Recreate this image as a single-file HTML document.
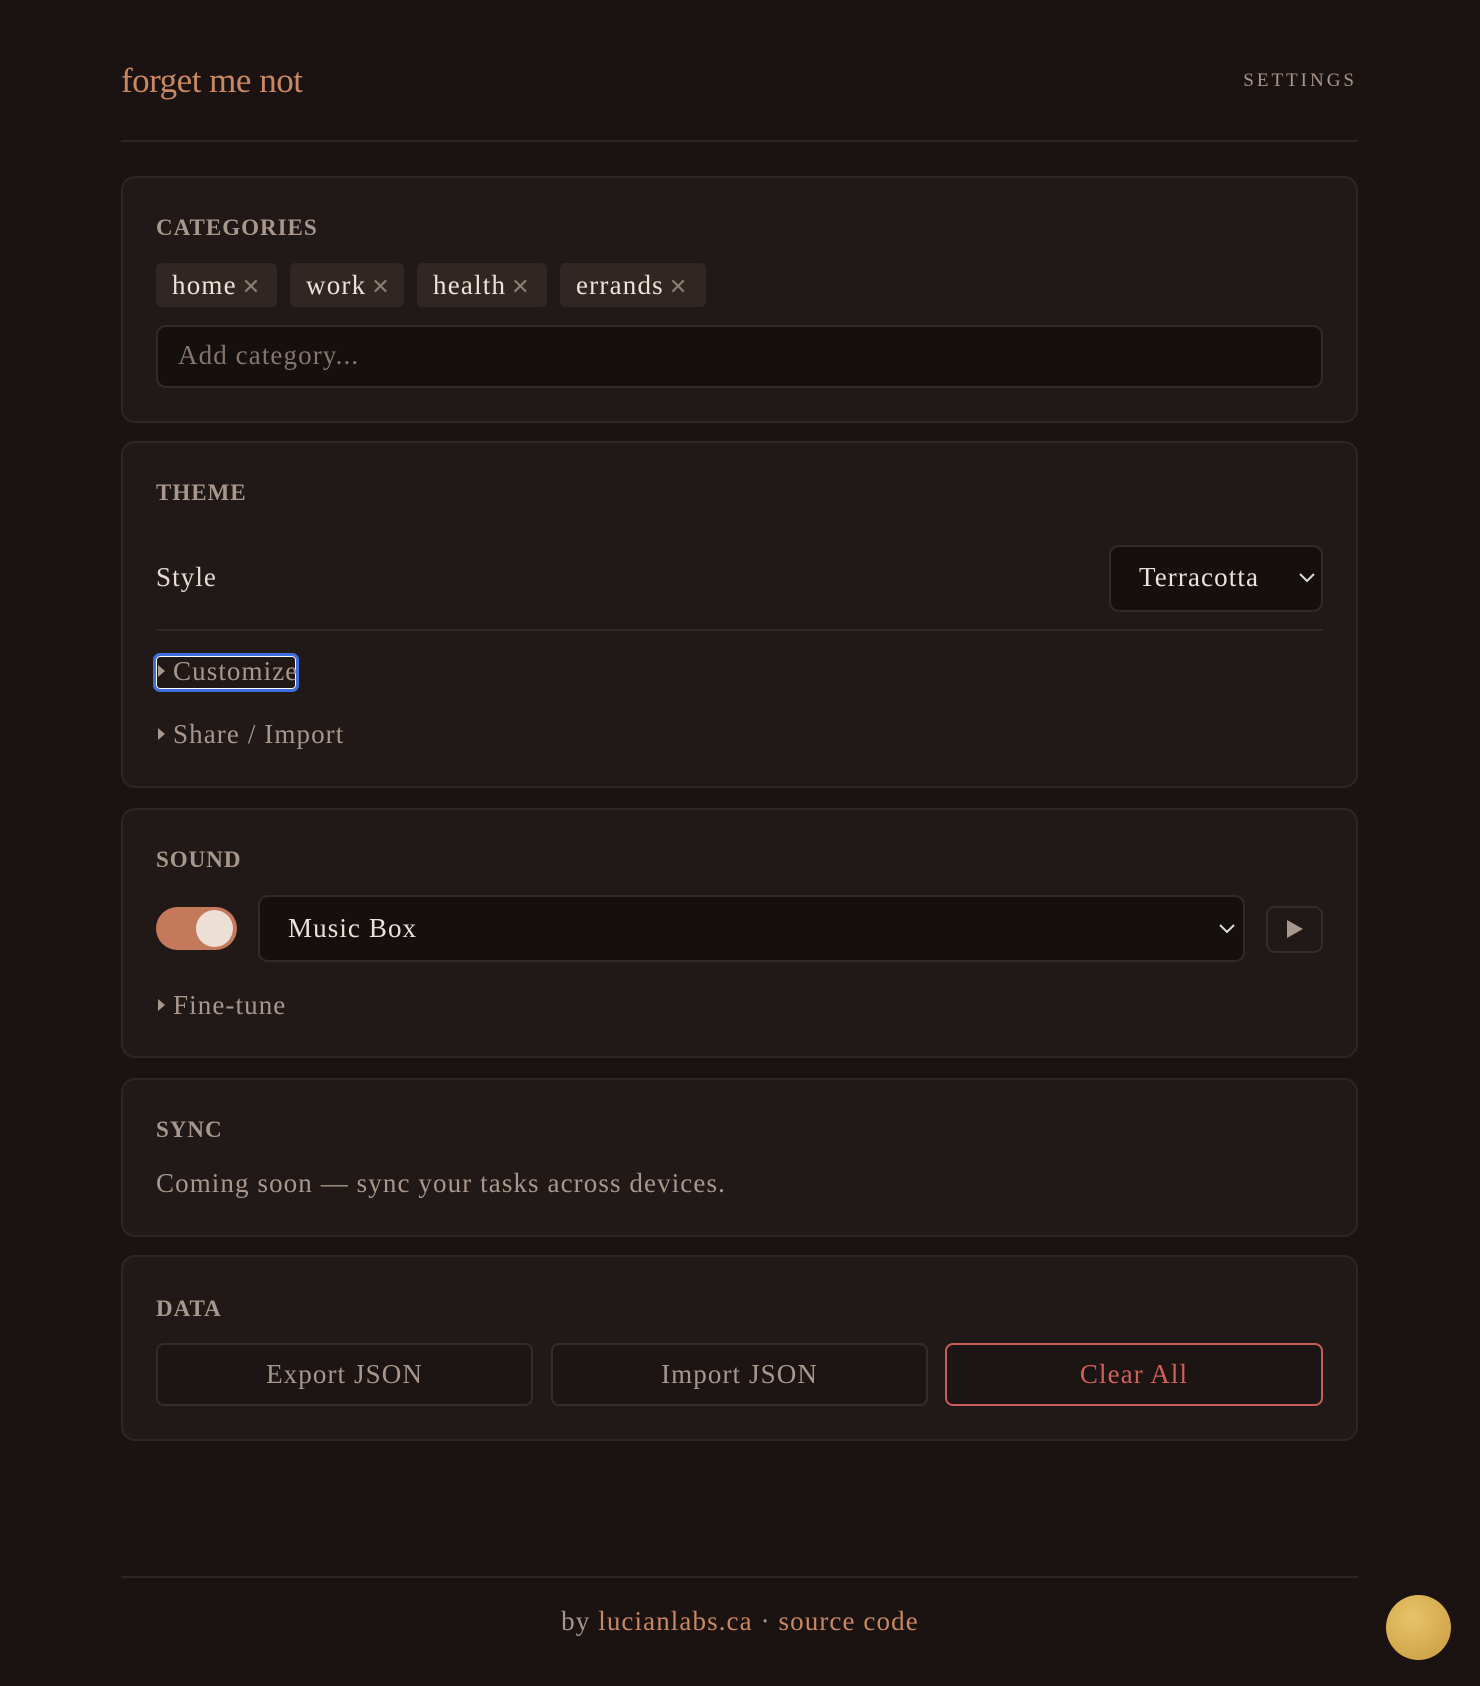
<!DOCTYPE html>
<html><head><meta charset="utf-8"><style>
*{box-sizing:border-box;margin:0;padding:0}
body{width:1480px;height:1686px;background:#1a1311;font-family:"Liberation Serif",serif;color:#e6dbd2;position:relative;overflow:hidden}
.a{position:absolute}
.logo{left:121px;top:61px;font-size:35px;color:#c98763;letter-spacing:-0.5px}
.set{right:123px;top:70px;font-size:19px;letter-spacing:3px;color:#a8978c}
.hl{left:121px;width:1237px;height:2px;background:#2f2623}
.card{left:121px;width:1237px;background:#211917;border:2px solid #2f2623;border-radius:14px}
.lab{left:156px;font-size:23px;font-weight:bold;letter-spacing:1px;color:#a8978c}
.chip{top:263px;height:44px;background:#302622;border-radius:5px;font-size:27px;letter-spacing:1.2px;line-height:44px;padding-left:16px;color:#ece2d9}
.chip span{color:#8c7d74;font-size:22px;margin-left:5px;letter-spacing:0}
.inp{border:2px solid #32292a;background:#150f0e;border-radius:10px}
.tx{font-size:27px;letter-spacing:1.1px}
.btn{top:1343px;height:63px;border:2px solid #352c29;border-radius:8px;background:#1c1513;font-size:27px;letter-spacing:1.1px;line-height:59px;text-align:center;color:#a8978c}
.tri{display:inline-block;width:0;height:0;border-left:7px solid #a8978c;border-top:6px solid transparent;border-bottom:6px solid transparent;margin-right:8px;vertical-align:3px}
</style></head><body>
<div class="a logo">forget me not</div>
<div class="a set">SETTINGS</div>
<div class="a hl" style="top:140px"></div>

<div class="a card" style="top:176px;height:247px"></div>
<div class="a lab" style="top:215px">CATEGORIES</div>
<div class="a chip" style="left:156px;width:121px">home<span>✕</span></div>
<div class="a chip" style="left:290px;width:114px">work<span>✕</span></div>
<div class="a chip" style="left:417px;width:130px">health<span>✕</span></div>
<div class="a chip" style="left:560px;width:146px">errands<span>✕</span></div>
<div class="a inp" style="left:156px;top:325px;width:1167px;height:63px"></div>
<div class="a tx" style="left:178px;top:340px;color:#85766d">Add category...</div>

<div class="a card" style="top:441px;height:347px"></div>
<div class="a lab" style="top:480px">THEME</div>
<div class="a tx" style="left:156px;top:562px">Style</div>
<div class="a inp" style="left:1109px;top:545px;width:214px;height:67px"></div>
<div class="a tx" style="left:1139px;top:562px;color:#ece2d9">Terracotta</div>
<svg class="a" style="left:1297px;top:571px" width="20" height="14"><path d="M3 3l7 7 7-7" stroke="#ddd" stroke-width="2" fill="none"/></svg>
<div class="a hl" style="left:156px;width:1167px;top:629px;background:#322926"></div>
<div class="a" style="left:153px;top:653px;width:146px;height:39px;border:3px solid #3d6fe0;border-radius:7px;box-shadow:0 0 0 1px #fff inset"></div>
<div class="a tx" style="left:158px;top:656px;color:#a8978c"><i class="tri"></i>Customize</div>
<div class="a tx" style="left:158px;top:719px;color:#a8978c"><i class="tri"></i>Share / Import</div>

<div class="a card" style="top:808px;height:250px"></div>
<div class="a lab" style="top:847px">SOUND</div>
<div class="a" style="left:156px;top:907px;width:81px;height:43px;border-radius:22px;background:#c47a5a"></div>
<div class="a" style="left:196px;top:910px;width:37px;height:37px;border-radius:50%;background:#ecdfd6"></div>
<div class="a inp" style="left:258px;top:895px;width:987px;height:67px"></div>
<div class="a tx" style="left:288px;top:913px;color:#ece2d9">Music Box</div>
<svg class="a" style="left:1217px;top:922px" width="20" height="14"><path d="M3 3l7 7 7-7" stroke="#ddd" stroke-width="2" fill="none"/></svg>
<div class="a" style="left:1266px;top:906px;width:57px;height:47px;border:2px solid #352c29;border-radius:9px"></div>
<svg class="a" style="left:1285px;top:918px" width="20" height="22"><path d="M2 2L18 11L2 20Z" fill="#a8978c"/></svg>
<div class="a tx" style="left:158px;top:990px;color:#a8978c"><i class="tri"></i>Fine-tune</div>

<div class="a card" style="top:1078px;height:159px"></div>
<div class="a lab" style="top:1117px">SYNC</div>
<div class="a tx" style="left:156px;top:1168px;color:#a8978c">Coming soon — sync your tasks across devices.</div>

<div class="a card" style="top:1255px;height:186px"></div>
<div class="a lab" style="top:1296px">DATA</div>
<div class="a btn" style="left:156px;width:377px">Export JSON</div>
<div class="a btn" style="left:551px;width:377px">Import JSON</div>
<div class="a btn" style="left:945px;width:378px;border-color:#c85c58;color:#d0605a">Clear All</div>

<div class="a hl" style="top:1576px"></div>
<div class="a tx" style="left:0;width:1480px;text-align:center;top:1606px;color:#a8978c">by <span style="color:#c98763">lucianlabs.ca</span> · <span style="color:#c98763">source code</span></div>
<div class="a" style="left:1386px;top:1595px;width:65px;height:65px;border-radius:50%;background:radial-gradient(circle at 40% 35%,#e8c36a,#c99b3e)"></div>
</body></html>
